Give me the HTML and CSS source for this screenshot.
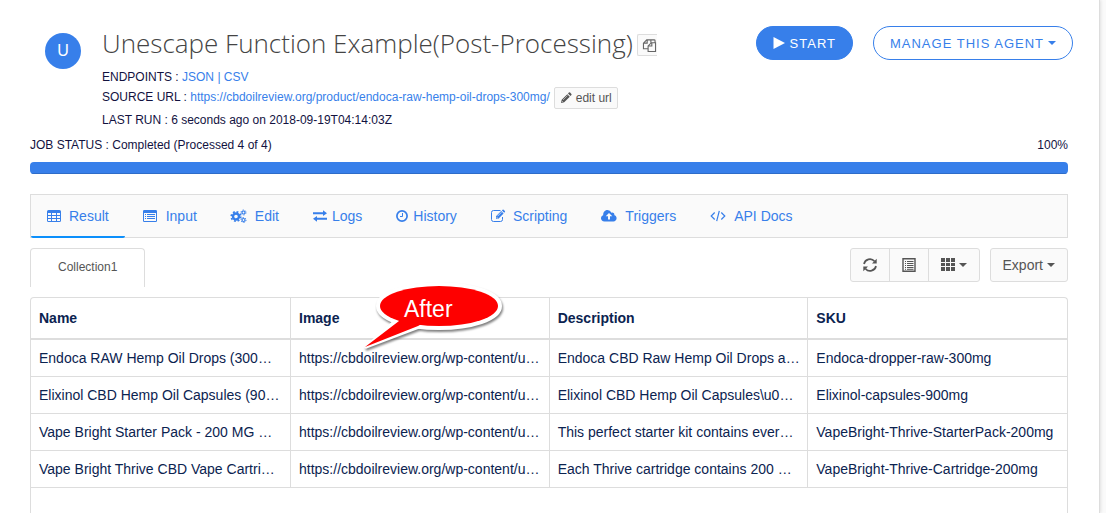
FILE: index.html
```html
<!DOCTYPE html>
<html lang="en">
<head>
<meta charset="utf-8">
<title>Unescape Function Example(Post-Processing)</title>
<link rel="stylesheet" href="styles.css">
</head>
<body>
<main class="panel">
  <header class="agent">
    <div class="avatar">U</div>
    <div class="agent-info">
      <div class="title-row">
        <h1 class="title">Unescape Function Example(Post-Processing)</h1>
        <button class="copy-button" type="button" aria-label="Copy">
          <svg class="icon-copy" viewBox="0 0 14 14"><path d="M5 10.500H.5V4.500L4 1h4.500v3M4.500 1v3.500H.5M5.500 13.500V7.500L9 4h4.500v9.500zM9.500 4v3.500h-4M8.500 3V1H12q1 0 1 1v2" fill="none" stroke="currentColor" stroke-width="1.200"/></svg>
        </button>
      </div>
      <p class="meta">ENDPOINTS : <a href="#">JSON</a> <a href="#">|</a> <a href="#">CSV</a></p>
      <div class="meta meta-source">
        <span>SOURCE URL : <a href="#">https://cbdoilreview.org/product/endoca-raw-hemp-oil-drops-300mg/</a></span>
        <button class="edit-button" type="button"><svg class="icon-small" viewBox="0 0 12 12"><path d="M1 11l.7-3.200L7.300 2.200l2.500 2.500L4.200 10.300zM8 1.500l.9-.9q.6-.5 1.200 0l1.300 1.300q.5.600 0 1.200l-.9.900z" fill="currentColor"/><path d="M3 8l4.500-4.500M2 9l1 1" stroke="#fafafa" stroke-width=".5"/></svg>edit url</button>
      </div>
      <p class="meta">LAST RUN : 6 seconds ago on 2018-09-19T04:14:03Z</p>
    </div>
    <div class="actions">
      <button class="pill pill-solid" type="button"><svg class="icon-play" viewBox="0 0 12 12"><path d="M.5 0L12 6 .5 12z" fill="currentColor"/></svg>START</button>
      <button class="pill pill-outline" type="button">MANAGE THIS AGENT<span class="caret"></span></button>
    </div>
  </header>

  <section class="job">
    <div class="job-text"><span>JOB STATUS : Completed (Processed 4 of 4)</span><span>100%</span></div>
    <div class="progress" role="progressbar" aria-label="Job progress" aria-valuenow="100" aria-valuemin="0" aria-valuemax="100"><div class="progress-fill"></div></div>
  </section>

  <nav class="tabs">
    <a class="tab tab-active" href="#"><svg class="icon" viewBox="0 0 14 14"><path fill="currentColor" fill-rule="evenodd" d="M1.500 1h11Q14 1 14 2.500v9q0 1.500-1.500 1.500h-11Q0 13 0 11.500v-9Q0 1 1.500 1zM1 4v2h3V4zm4 0v2h4V4zm5 0v2h3V4zM1 7v2h3V7zm4 0v2h4V7zm5 0v2h3V7zM1 10v2h3v-2zm4 0v2h4v-2zm5 0v2h3v-2z"/></svg>Result</a>
    <a class="tab" href="#"><svg class="icon icon-list" viewBox="0 0 15 14"><path fill="currentColor" fill-rule="evenodd" d="M1.200 1h11.600Q14 1 14 2.200v9.600q0 1.200-1.200 1.200H1.200Q0 13 0 11.800V2.200Q0 1 1.200 1zM1 4v8h12V4z"/><path stroke="currentColor" d="M2 5.500h1M4 5.500h8M2 7.500h1M4 7.500h8M2 9.500h1M4 9.500h8"/></svg>Input</a>
    <a class="tab" href="#"><svg class="icon icon-wide" viewBox="0 0 16 14"><g fill="none" stroke="currentColor"><circle cx="5" cy="7.500" r="3" stroke-width="2.400"/><circle cx="5" cy="7.500" r="4.700" stroke-width="1.800" stroke-dasharray="1.850 1.840"/><circle cx="12.500" cy="3.500" r="1.500" stroke-width="1.200"/><circle cx="12.500" cy="3.500" r="2.500" stroke-dasharray="1.300 1.320"/><circle cx="12.500" cy="11" r="1.500" stroke-width="1.200"/><circle cx="12.500" cy="11" r="2.500" stroke-dasharray="1.300 1.320"/></g></svg>Edit</a>
    <a class="tab tab-tight" href="#"><svg class="icon" viewBox="0 0 14 14"><path fill="currentColor" d="M0 3.200h10V1.300L14 4.200 10 7V5.200H0zM14 8.800H4V7L0 9.800l4 2.900v-1.900h10z"/></svg>Logs</a>
    <a class="tab tab-tight" href="#"><svg class="icon icon-narrow" viewBox="0 0 12 14"><circle cx="6" cy="7" r="5.100" fill="none" stroke="currentColor" stroke-width="1.700"/><path d="M6.500 4v3.500H4" fill="none" stroke="currentColor"/></svg>History</a>
    <a class="tab" href="#"><svg class="icon" viewBox="0 0 14 14"><path fill="none" stroke="currentColor" d="M9.500 1.500H2.500q-2 0-2 2v7q0 2 2 2h7q2 0 2-2V8"/><path fill="currentColor" d="M5 9.800V7.300l5.200-5.200 2.400 2.400L7.400 9.800zM10.900 1.500l.7-.7q.5-.5 1 0l1.300 1.300q.5.500 0 1l-.7.700z"/><path stroke="#fafafa" stroke-width=".7" d="M6.500 7.200l4-4M6 8.200v.8h.8"/></svg>Scripting</a>
    <a class="tab" href="#"><svg class="icon icon-wide" viewBox="0 0 16 14"><path fill="currentColor" fill-rule="evenodd" d="M3.500 12.500C-1 12-.8 7 2.200 6.200 2 2.500 4.500 1 6.500 1q2.700 0 4 2.700Q13.500 2.800 13.500 6.300C16.800 7.500 16 12.400 12.500 12.500zM8 4L4.700 7.300H7V10.500h2V7.300h2.300z"/></svg>Triggers</a>
    <a class="tab" href="#"><svg class="icon icon-wide" viewBox="0 0 16 14"><path fill="none" stroke="currentColor" stroke-width="1.200" d="M4.700 3.500L1.200 7l3.500 3.500M11.300 3.500L14.800 7l-3.500 3.500M9.300 1.800L6.700 12.200"/></svg>API Docs</a>
  </nav>

  <div class="toolbar">
    <a class="collection" href="#">Collection1</a>
    <div class="tools">
      <div class="button-group">
        <button class="tool" type="button" aria-label="Refresh"><svg class="icon" viewBox="0 0 14 14"><path fill="none" stroke="currentColor" stroke-width="1.700" d="M1 6A6 6 0 0 1 11.500 3.300M13 8A6 6 0 0 1 2.500 10.700"/><path fill="currentColor" d="M13.700.8v4.700H9zM.3 13.200V8.500H5z"/></svg></button>
        <button class="tool" type="button" aria-label="List view"><svg class="icon" viewBox="0 0 14 14"><path fill="none" stroke="currentColor" stroke-width="1.400" d="M1 .8h12v12.500H1z"/><path stroke="currentColor" d="M3 3.500h1M5 3.500h6.500M3 5.500h1M5 5.500h6.500M3 7.500h1M5 7.500h6.500M3 9.500h1M5 9.500h6.500M3 11.300h1M5 11.300h6.500"/></svg></button>
        <button class="tool tool-columns" type="button" aria-label="Columns"><svg class="icon" viewBox="0 0 14 14"><path fill="currentColor" d="M0 0h4v4H0zM5 0h4v4H5zM10 0h4v4h-4zM0 5h4v3H0zM5 5h4v3H5zM10 5h4v3h-4zM0 9h4v4H0zM5 9h4v4H5zM10 9h4v4h-4z"/></svg><span class="caret"></span></button>
      </div>
      <button class="tool tool-export" type="button">Export<span class="caret"></span></button>
    </div>
  </div>

  <section class="grid">
    <table class="results">
      <thead>
        <tr><th>Name</th><th>Image
          <div class="callout">
            <svg class="callout-shape" viewBox="0 0 150 80"><g fill="#fff" stroke="#fff" stroke-linejoin="round"><ellipse cx="76" cy="22" rx="59" ry="20" stroke-width="8"/><path d="M33 36L3 63 56 43z" stroke-width="3"/></g><g fill="#fe0000"><ellipse cx="76" cy="22" rx="59" ry="20"/><path d="M36 37L2 63 55 42 76 30 45 28z"/></g></svg>
            <span class="callout-text">After</span>
          </div></th><th>Description</th><th>SKU</th></tr>
      </thead>
      <tbody>
        <tr><td>Endoca RAW Hemp Oil Drops (300…</td><td>https://cbdoilreview.org/wp-content/u…</td><td>Endoca CBD Raw Hemp Oil Drops a…</td><td>Endoca-dropper-raw-300mg</td></tr>
        <tr><td>Elixinol CBD Hemp Oil Capsules (90…</td><td>https://cbdoilreview.org/wp-content/u…</td><td>Elixinol CBD Hemp Oil Capsules\u0…</td><td>Elixinol-capsules-900mg</td></tr>
        <tr><td>Vape Bright Starter Pack - 200 MG …</td><td>https://cbdoilreview.org/wp-content/u…</td><td>This perfect starter kit contains ever…</td><td>VapeBright-Thrive-StarterPack-200mg</td></tr>
        <tr><td>Vape Bright Thrive CBD Vape Cartri…</td><td>https://cbdoilreview.org/wp-content/u…</td><td>Each Thrive cartridge contains 200 …</td><td>VapeBright-Thrive-Cartridge-200mg</td></tr>
      </tbody>
    </table>
  </section>
</main>
</body>
</html>
```
FILE: styles.css
```css
* { box-sizing: border-box; }

body {
  margin: 0;
  background: #fafafa;
  color: #12123f;
  font: 12px/20px "Liberation Sans", Arial, sans-serif;
}

a { color: #377fea; text-decoration: none; }

button {
  margin: 0;
  font-family: inherit;
  cursor: pointer;
}

svg { display: block; flex: none; overflow: visible; }

.panel {
  display: flex;
  flex-direction: column;
  min-height: 100vh;
  margin-right: 6px;
  padding: 22px 31px 0 30px;
  background: #fff;
  border-right: 1px solid #ddd;
  box-shadow: 1px 0 3px rgba(0, 0, 0, .1);
}

.agent { display: flex; align-items: flex-start; }

.avatar {
  width: 36px;
  height: 36px;
  margin: 11px 21px 0 15px;
  border-radius: 50%;
  background: #377fea;
  color: #fff;
  font-size: 16px;
  line-height: 36px;
  text-align: center;
}

.agent-info { flex: 1; min-width: 0; }

.title-row {
  display: flex;
  align-items: center;
  gap: 4px;
  height: 45px;
  padding-bottom: 4px;
}

.title {
  margin: 0;
  color: #444;
  font: 300 26px/40px "Open Sans", sans-serif;
  white-space: nowrap;
}

.copy-button {
  display: flex;
  align-items: center;
  width: 20px;
  height: 22px;
  margin-top: 5px;
  padding: 0 0 0 5px;
  border: 1px solid #ddd;
  border-right: 0;
  border-radius: 2px 0 0 2px;
  background: #fafafa;
  color: #666;
}

.icon-copy { width: 13px; height: 13px; }

.meta { margin: 0; }

.meta-source {
  display: flex;
  gap: 4px;
  height: 23px;
}

.edit-button {
  display: flex;
  align-items: center;
  gap: 4px;
  height: 22px;
  padding: 0 5px;
  border: 1px solid #ddd;
  border-radius: 2px;
  background: #fafafa;
  color: #555;
  font-size: 12px;
}

.icon-small { width: 12px; height: 12px; }

.actions { display: flex; gap: 20px; margin: 4px -5px 0 0; }

.pill {
  display: flex;
  align-items: center;
  height: 34px;
  padding: 0 16px;
  border: 1px solid #377fea;
  border-radius: 17px;
  font-size: 13px;
  letter-spacing: 1px;
  white-space: nowrap;
}

.pill-solid { gap: 5px; background: #377fea; color: #fff; }
.pill-outline { gap: 4px; background: #fff; color: #377fea; }
.icon-play { width: 12px; height: 12px; }

.caret {
  border: 4px solid transparent;
  border-top-color: currentColor;
  border-bottom: 0;
}

.job { margin-top: 5px; }
.job-text { display: flex; justify-content: space-between; }

.progress {
  height: 12px;
  margin-top: 7px;
  border-radius: 4px;
  background: #eee;
  overflow: hidden;
}

.progress-fill { height: 100%; background: #377fea; box-shadow: inset 0 -1px 0 #2e6cc8; }

.tabs {
  display: flex;
  gap: 2px;
  height: 44px;
  margin-top: 20px;
  border: 1px solid #ddd;
  background: #fafafa;
}

.tab {
  display: flex;
  align-items: center;
  gap: 8px;
  margin-bottom: -1px;
  padding: 0 16px;
  border-bottom: 2px solid transparent;
  font-size: 14px;
  white-space: nowrap;
}

.tab-tight { gap: 5px; }
.tab-active { border-color: #0c8ffb; border-radius: 0 0 2px 2px; }

.icon { width: 14px; height: 14px; }
.icon-list { width: 15px; }
.icon-wide { width: 16px; }
.icon-narrow { width: 12px; }

.toolbar {
  display: flex;
  justify-content: space-between;
  align-items: flex-start;
  margin-top: 10px;
}

.collection {
  height: 39px;
  padding: 0 27px;
  border: 1px solid #ddd;
  border-bottom: 0;
  border-radius: 4px 4px 0 0;
  color: #555;
  line-height: 36px;
}

.tools { display: flex; gap: 10px; }
.button-group { display: flex; }

.tool {
  display: flex;
  align-items: center;
  gap: 4px;
  height: 34px;
  padding: 0 12px;
  border: 1px solid #ddd;
  background: #fafafa;
  color: #555;
  font-size: 14px;
}

.tool + .tool { margin-left: -1px; }
.tool:first-child { border-radius: 3px 0 0 3px; }
.button-group .tool:last-child { border-radius: 0 3px 3px 0; }
.tools .tool-export { border-radius: 3px; }

.grid {
  flex: 1;
  margin-top: 10px;
  border: 1px solid #ddd;
  border-bottom: 0;
  border-radius: 4px 4px 0 0;
}

.results {
  width: 100%;
  border-collapse: separate;
  border-spacing: 0;
  table-layout: fixed;
  color: #0b2350;
  font-size: 14px;
}

.results th,
.results td {
  padding: 8px 0 8px 8px;
  border-right: 1px solid #ddd;
  border-bottom: 1px solid #ddd;
  text-align: left;
  white-space: nowrap;
}

.results td { overflow: hidden; text-overflow: ellipsis; }
.results th { position: relative; padding: 10px 8px; border-bottom-width: 2px; }
.results th:first-child { width: 260px; }
.results th:last-child,
.results td:last-child { border-right: 0; }

.callout {
  position: absolute;
  top: -14px;
  left: 72px;
  width: 150px;
  height: 80px;
}

.callout-shape {
  width: 150px;
  height: 80px;
  filter: drop-shadow(1px 2px 1px rgba(0, 0, 0, .5));
}

.callout-text {
  position: absolute;
  top: 12px;
  left: 41px;
  color: #fff;
  font-size: 23px;
  font-weight: 400;
  line-height: 26px;
}
```
